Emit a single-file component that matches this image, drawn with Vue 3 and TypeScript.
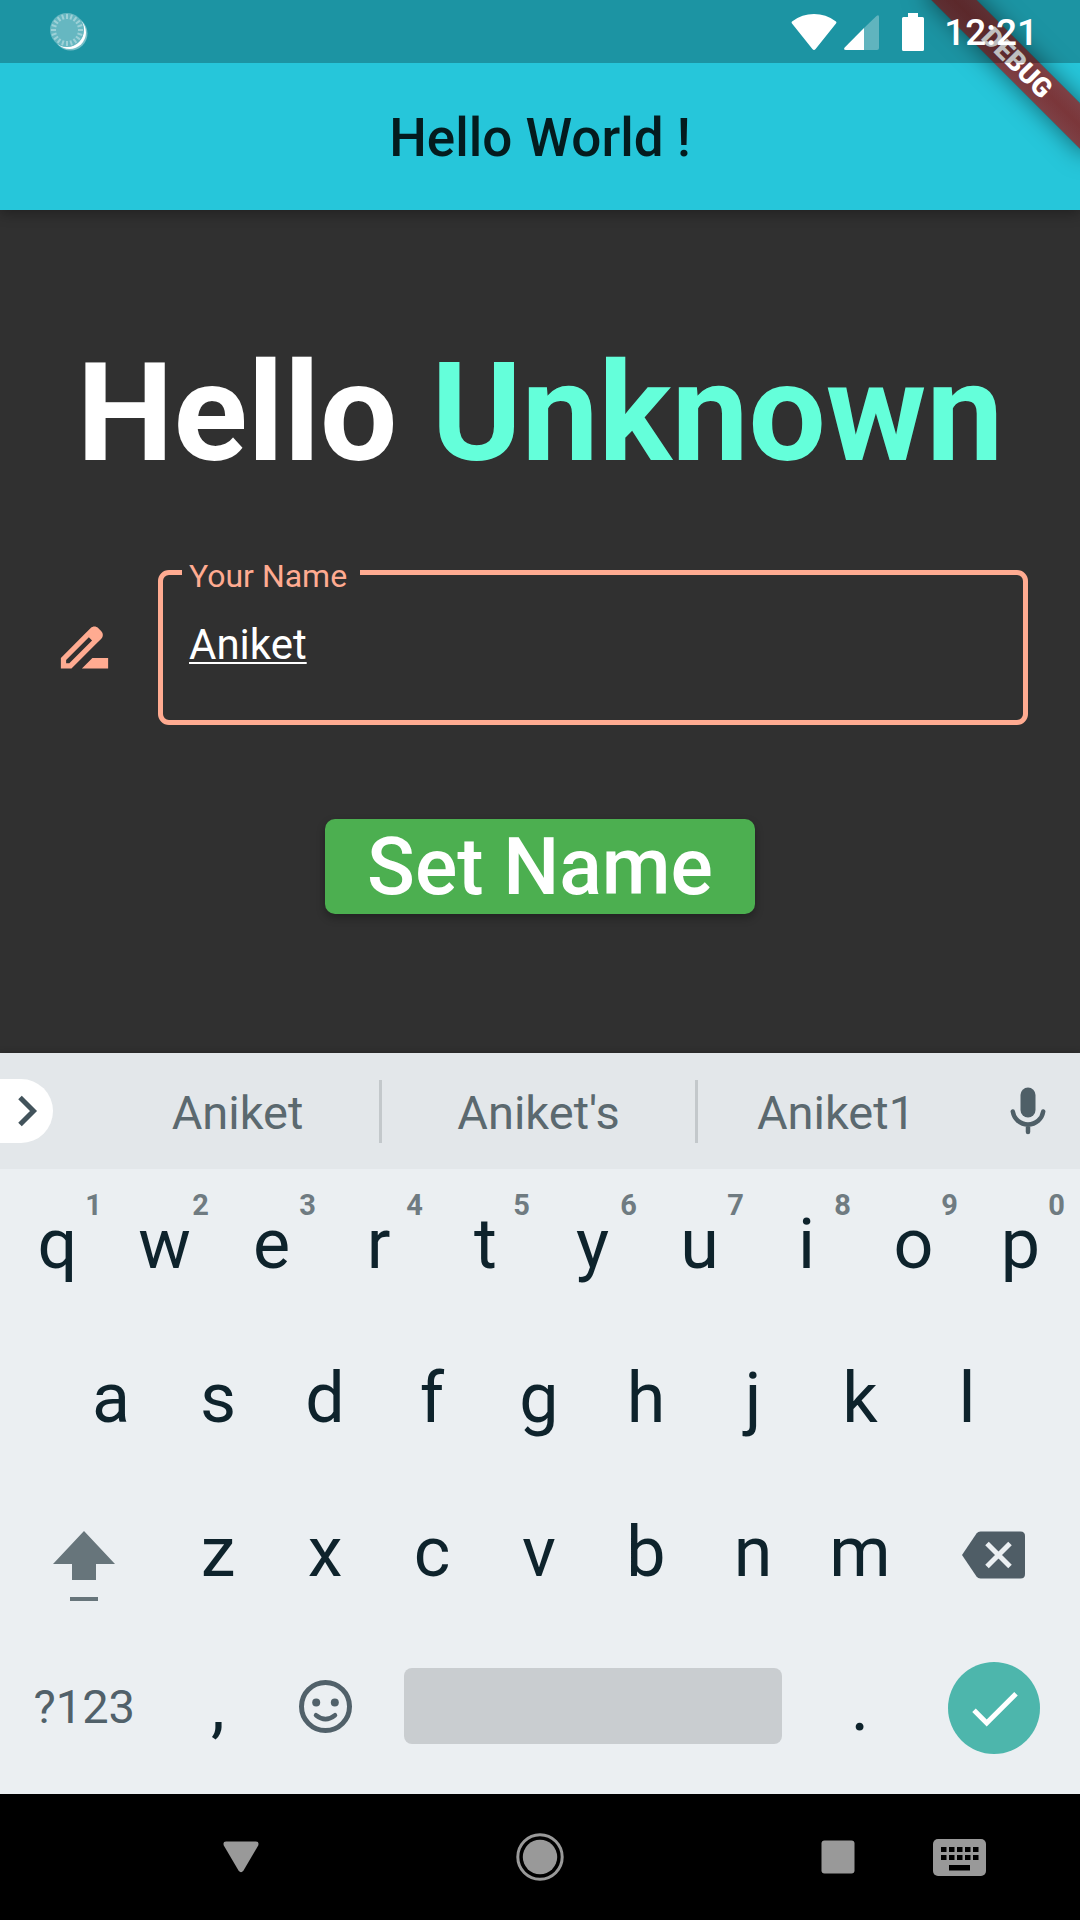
<script setup lang="ts">
import { ref } from 'vue'

interface LetterKey {
  letter: string
  hint?: string
}

const name = ref('Aniket')
const greeting = ref('Unknown')

const topRow: LetterKey[] = 'qwertyuiop'.split('').map((letter, i) => ({
  letter,
  hint: String((i + 1) % 10),
}))
const homeRow: LetterKey[] = 'asdfghjkl'.split('').map((letter) => ({ letter }))
const bottomRow: LetterKey[] = 'zxcvbnm'.split('').map((letter) => ({ letter }))

const ticks = Array.from({ length: 20 }, (_, i) => i * 18)
const dotColumns = [8, 16, 24, 32, 40]

function type(text: string) {
  name.value += text
}
function erase() {
  name.value = name.value.slice(0, -1)
}
function apply() {
  greeting.value = name.value || 'Unknown'
}
</script>

<template>
  <div class="screen">
    <header class="top">
      <div class="debug">DEBUG</div>
      <div class="status">
        <svg class="spinner" width="40" height="40" viewBox="0 0 40 40" aria-hidden="true">
          <mask id="crescent">
            <rect width="40" height="40" fill="#fff" />
            <circle cx="18" cy="18" r="17" fill="#000" />
          </mask>
          <circle cx="18" cy="18" r="17" fill="#fff" opacity="0.33" />
          <g stroke="#fff" stroke-width="2" opacity="0.36">
            <line v-for="a in ticks" :key="a" x1="18" y1="2" x2="18" y2="7" :transform="`rotate(${a} 18 18)`" />
          </g>
          <g mask="url(#crescent)" fill="#fff">
            <circle cx="21.5" cy="21.5" r="17" opacity="0.4" />
            <circle cx="20.5" cy="20.5" r="16.5" />
          </g>
        </svg>
        <svg class="wifi" width="46" height="36" viewBox="0 0 46 36" fill="#fff" aria-hidden="true">
          <path d="M1 9.6Q0 8.2 1.4 7.2Q11 0 23 0T44.6 7.2Q46 8.2 45 9.6L24.6 35Q23 37 21.4 35Z" />
        </svg>
        <svg class="signal" width="35" height="35" viewBox="0 0 35 35" fill="#fff" aria-hidden="true">
          <path d="M20 13V35H2Q-1 35 .7 32.5Z" />
          <path d="M20 13L32.500 1Q35-1 35 2V33Q35 35 33 35H20Z" opacity="0.3" />
        </svg>
        <svg class="battery" width="22" height="38" viewBox="0 0 22 38" fill="#fff" aria-hidden="true">
          <path d="M6 0H16V4H20.5Q22 4 22 5.5V36.5Q22 38 20.5 38H1.5Q0 38 0 36.5V5.5Q0 4 1.5 4H6Z" />
        </svg>
        <time>12:21</time>
      </div>
      <div class="appbar">Hello World !</div>
    </header>

    <main>
      <h1>Hello <span>{{ greeting }}</span></h1>
      <div class="entry">
        <svg width="63" height="63" viewBox="0 0 24 24" fill="#ffab91" aria-hidden="true">
          <path d="M18.41 5.8L17.2 4.59c-.78-.78-2.05-.78-2.83 0l-2.68 2.68L3 15.96V20h4.04l8.74-8.74 2.63-2.63c.79-.78.79-2.05 0-2.83zM6.21 18H5v-1.21l8.66-8.66 1.21 1.21L6.21 18zM11 20l4-4h6v4H11z" />
        </svg>
        <div class="field">
          <label for="name">Your Name</label>
          <input id="name" v-model="name" type="text" autocomplete="off" spellcheck="false" />
        </div>
      </div>
      <button class="submit" type="button" @click="apply">Set Name</button>
    </main>

    <section class="keyboard" aria-label="Keyboard">
      <div class="suggestions">
        <button class="expand" type="button" aria-label="More">
          <svg width="20" height="32" viewBox="0 0 20 32" fill="none" stroke="#42535b" stroke-width="5" aria-hidden="true">
            <path d="M2 2.5L15.500 16L2 29.5" />
          </svg>
        </button>
        <button type="button" @click="name = 'Aniket'">Aniket</button>
        <i class="divider"></i>
        <button type="button" @click="name = 'Aniket\'s'">Aniket's</button>
        <i class="divider"></i>
        <button type="button" @click="name = 'Aniket1'">Aniket1</button>
        <button class="mic" type="button" aria-label="Voice input">
          <svg width="36" height="48" viewBox="0 0 36 48" aria-hidden="true">
            <rect x="10.5" y="0.5" width="15" height="30" rx="7.5" fill="#4f5f67" />
            <path d="M2.8 24.5C4 32 10 37.5 18 37.5S32 32 33.2 24.5M18 37.5V45" fill="none" stroke="#4f5f67" stroke-width="4.5" stroke-linecap="round" />
          </svg>
        </button>
      </div>

      <div class="keys">
        <div class="row">
          <button v-for="k in topRow" :key="k.letter" class="key" type="button" @click="type(k.letter)">
            {{ k.letter }}<small>{{ k.hint }}</small>
          </button>
        </div>
        <div class="row home">
          <button v-for="k in homeRow" :key="k.letter" class="key" type="button" @click="type(k.letter)">{{ k.letter }}</button>
        </div>
        <div class="row">
          <button class="key wide icon" type="button" aria-label="Shift">
            <svg width="62" height="94" viewBox="0 0 62 94" fill="#67757b" aria-hidden="true">
              <path d="M31 24L62 57H43V73H19V57H0ZM17 90H45V94H17Z" />
            </svg>
          </button>
          <button v-for="k in bottomRow" :key="k.letter" class="key" type="button" @click="type(k.letter)">{{ k.letter }}</button>
          <button class="key wide icon" type="button" aria-label="Backspace" @click="erase">
            <svg width="63" height="50" viewBox="0 0 63 50" aria-hidden="true">
              <path d="M0 26L14.500 4.500Q16 2.500 18.500 2.500H58.500Q63 2.500 63 7V45Q63 49.500 58.500 49.500H18.500Q16 49.500 14.500 47.500Z" fill="#4f5d66" />
              <path d="M25 14.500L48 37.500M48 14.500L25 37.500" stroke="#ebeff2" stroke-width="5" />
            </svg>
          </button>
        </div>
        <div class="row">
          <button class="key wide symbols" type="button">?123</button>
          <button class="key" type="button" @click="type(',')">,</button>
          <button class="key icon emoji" type="button" aria-label="Emoji">
            <svg width="53" height="53" viewBox="0 0 53 53" aria-hidden="true">
              <circle cx="26.5" cy="26.5" r="24" fill="none" stroke="#51616a" stroke-width="5" />
              <circle cx="17.2" cy="22.5" r="4" fill="#51616a" />
              <circle cx="35.8" cy="22.5" r="4" fill="#51616a" />
              <path d="M17 35.2Q26.5 43 36 35.2" fill="none" stroke="#51616a" stroke-width="4.5" stroke-linecap="round" />
            </svg>
          </button>
          <button class="space" type="button" aria-label="Space" @click="type(' ')"></button>
          <button class="key" type="button" @click="type('.')">.</button>
          <button class="key wide icon" type="button" aria-label="Done" @click="apply">
            <svg width="92" height="92" viewBox="0 0 92 92" aria-hidden="true">
              <circle cx="46" cy="46" r="46" fill="#4db6ac" />
              <path d="M26 48.3L38.7 61L68 31.7" fill="none" stroke="#fff" stroke-width="5" />
            </svg>
          </button>
        </div>
      </div>
    </section>

    <nav>
      <button class="back" type="button" aria-label="Back">
        <svg width="36" height="32" viewBox="0 0 36 32" fill="#999" aria-hidden="true">
          <path d="M3 .5H33Q36.5 .5 35.2 4.5L20.5 29.5Q18 33 15.5 29.5L.8 4.5Q-.5 .5 3 .5Z" />
        </svg>
      </button>
      <button class="home-button" type="button" aria-label="Home">
        <svg width="48" height="48" viewBox="0 0 48 48" aria-hidden="true">
          <circle cx="24" cy="24" r="22.2" fill="none" stroke="#999" stroke-width="3" />
          <circle cx="24" cy="24" r="17.2" fill="#999" />
        </svg>
      </button>
      <button class="recents" type="button" aria-label="Recent apps">
        <svg width="34" height="34" viewBox="0 0 34 34" aria-hidden="true">
          <rect x="0.5" y="0.5" width="33" height="33" rx="3" fill="#999" />
        </svg>
      </button>
      <button class="switcher" type="button" aria-label="Switch keyboard">
        <svg width="53" height="37" viewBox="0 0 53 37" aria-hidden="true">
          <rect width="53" height="37" rx="5" fill="#999" />
          <g fill="#000">
            <template v-for="x in dotColumns" :key="x">
              <rect :x="x" y="8" width="5.5" height="5" />
              <rect :x="x" y="16" width="5.5" height="5" />
            </template>
            <rect x="16" y="26" width="21" height="5.5" />
          </g>
        </svg>
      </button>
    </nav>
  </div>
</template>

<style>
body {
  margin: 0;
  background: #303030;
}
</style>

<style scoped>
.screen {
  display: flex;
  flex-direction: column;
  min-height: 100vh;
  background: #303030;
  font-family: Roboto, 'Liberation Sans', sans-serif;
}

button {
  padding: 0;
  border: 0;
  background: none;
  color: inherit;
  font: inherit;
  cursor: pointer;
}

svg {
  display: block;
  flex: none;
}

.top {
  position: relative;
  overflow: hidden;
  background: #26c6da;
  box-shadow: 0 4px 12px rgba(0, 0, 0, 0.3);
}

.status {
  position: relative;
  display: flex;
  align-items: center;
  height: 63px;
  padding: 0 42px 0 49px;
  background: rgba(0, 0, 0, 0.25);
  color: #fff;
  font-size: 37px;
  font-weight: 500;
}

.status time {
  padding-top: 2px;
}

.spinner {
  margin-right: auto;
}

.signal {
  margin: 2px 23px 0 7px;
}

.battery {
  margin-right: 20px;
}

.appbar {
  display: flex;
  align-items: center;
  justify-content: center;
  height: 144px;
  padding-top: 3px;
  color: #041b1e;
  font-size: 53px;
  font-weight: 500;
}

.debug {
  position: absolute;
  top: 47px;
  right: -52px;
  width: 230px;
  height: 32px;
  background:
    linear-gradient(rgba(183, 28, 28, 0.63), rgba(183, 28, 28, 0.63)),
    linear-gradient(rgba(0, 0, 0, 0.36), rgba(0, 0, 0, 0.5), rgba(0, 0, 0, 0.36));
  box-shadow: 0 0 24px rgba(0, 0, 0, 0.5);
  color: #fff;
  font-size: 27px;
  font-weight: 900;
  line-height: 32px;
  text-align: center;
  transform: rotate(45deg);
}

main {
  display: flex;
  flex: 1;
  flex-direction: column;
  align-items: center;
  padding: 122px 52px 40px;
}

h1 {
  margin: 0 0 76px;
  color: #fff;
  font-size: 137px;
  font-weight: 700;
  line-height: 162px;
  white-space: nowrap;
}

h1 span {
  color: #64ffda;
}

.entry {
  display: flex;
  align-items: center;
  align-self: stretch;
  gap: 42px;
  margin-bottom: 94px;
  padding-left: 1px;
}

.field {
  position: relative;
  flex: 1;
  border: 5px solid #ffab91;
  border-radius: 11px;
}

.field label {
  position: absolute;
  top: -18px;
  left: 19px;
  padding: 0 13px 0 7px;
  background: #303030;
  color: #ffab91;
  font-size: 32px;
  line-height: 38px;
}

.field input {
  display: block;
  box-sizing: border-box;
  width: 100%;
  height: 145px;
  padding: 0 26px 6px;
  border: 0;
  outline: 0;
  background: none;
  color: #fff;
  font: 400 42px Roboto, 'Liberation Sans', sans-serif;
  text-decoration: underline 2px;
  text-underline-offset: 3px;
}

.submit {
  height: 95px;
  padding: 2px 42px 0;
  border-radius: 10px;
  background: #4caf50;
  box-shadow: 0 4px 8px rgba(0, 0, 0, 0.3);
  color: #fff;
  font-size: 79px;
  font-weight: 500;
  line-height: 93px;
}

.keyboard {
  background: #ebeff2;
  box-shadow: 0 -1px 6px rgba(0, 0, 0, 0.2);
}

.suggestions {
  display: grid;
  grid-template-columns: 96px 283fr 3px 313fr 3px 276fr 106px;
  align-items: center;
  height: 116px;
  background: #e3e7ea;
  color: #5b696f;
  font-size: 47px;
}

.suggestions button {
  height: 100%;
  padding-top: 2px;
}

.suggestions .expand {
  display: flex;
  align-items: center;
  justify-content: flex-end;
  width: 53px;
  height: 64px;
  padding: 0 15px 0 0;
  border-radius: 0 32px 32px 0;
  background: #fff;
}

.divider {
  height: 63px;
  background: #c3c8cb;
}

.suggestions .mic {
  display: flex;
  align-items: center;
  justify-content: center;
  padding: 0 0 0 2px;
}

.keys {
  padding: 0 6px 9px 4px;
}

.row {
  display: grid;
  grid-template-columns: repeat(20, 1fr);
  height: 154px;
}

.home {
  grid-template-columns: repeat(18, 1fr);
  padding: 0 5%;
}

.key {
  position: relative;
  grid-column: span 2;
  padding-bottom: 4px;
  color: #0e232c;
  font-size: 70px;
}

.wide {
  grid-column: span 3;
}

.icon {
  display: flex;
  align-items: center;
  justify-content: center;
  padding: 0;
}

.emoji {
  padding-bottom: 4px;
}

.symbols {
  color: #51616a;
  font-size: 47px;
}

.key small {
  position: absolute;
  top: 19px;
  right: 9px;
  color: #6f7b81;
  font-size: 29px;
  font-weight: 700;
  line-height: 34px;
}

.space {
  grid-column: span 8;
  height: 76px;
  margin: 37px 25px 0;
  border-radius: 8px;
  background: #c9cdd0;
}

nav {
  display: grid;
  grid-template-columns: 181fr 120fr 179fr 120fr 178fr 120fr 122fr 60fr;
  height: 126px;
  background: #000;
}

nav button {
  display: flex;
  align-items: center;
  justify-content: center;
}

.back {
  grid-column: 2;
}

.home-button {
  grid-column: 4;
}

.recents {
  grid-column: 6;
}
</style>
